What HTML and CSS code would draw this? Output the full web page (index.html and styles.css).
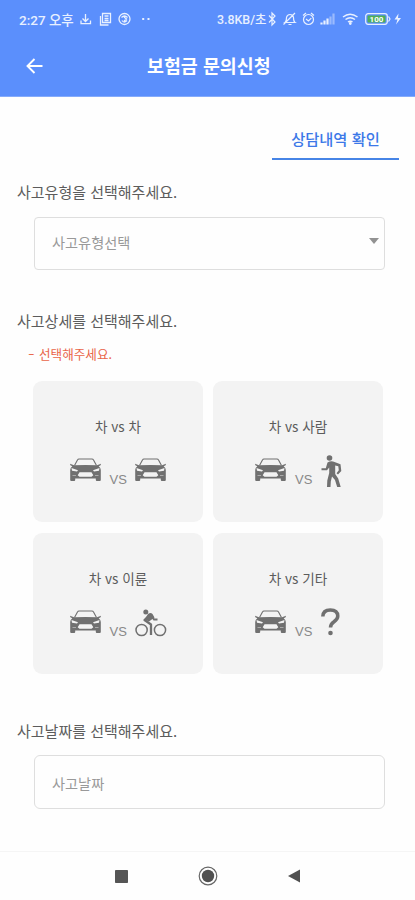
FILE: index.html
```html
<!DOCTYPE html>
<html lang="ko">
<head>
<meta charset="utf-8">
<meta name="viewport" content="width=device-width, initial-scale=1">
<title>보험금 문의신청</title>
<link rel="stylesheet" href="styles.css">
</head>
<body>
<svg class="defs" aria-hidden="true">
  <symbol id="car" viewBox="0 0 31 24">
    <path d="M4.500 7.500 7.600 1.800Q8 1 9 1H22Q23 1 23.400 1.800L26.500 7.500" fill="none" stroke="currentColor" stroke-width="1.100"/>
    <path d="M0 5.800 4 7.200Q15.500 6.800 27 7.200L31 5.800 30.600 7.200 28.700 8.200Q30.800 10 30.800 12V22q0 1-1 1h-3q-1 0-1-1v-1.500H5.200V22q0 1-1 1h-3q-1 0-1-1V12q0-2 2.100-3.800L.4 7.200z"/>
    <path d="M1.500 10 8 12.200 7 13.600 2 12.800zM29.500 10 23 12.200 24 13.600 29 12.800zM9.500 14.300h12l1.800 3-1.800 1.500h-12l-1.800-1.500z" fill="#f3f3f3"/>
    <path d="M2.500 17.500H6M25 17.500h3.500" stroke="#aaa" stroke-width="1"/>
  </symbol>
</svg>
<header class="top">
  <div class="status">
    <span class="time">2:27 오후</span>
    <svg class="s-left" width="70" height="16" viewBox="0 0 70 16" fill="none" stroke="currentColor" stroke-width="1.300">
      <path d="M5.500 3v7M2.500 7.500l3 3 3-3M1 9.500v3.200h9.500V9.500"/>
      <path d="M22.500 2.500h8v9h-8zM20.500 5v9h8M24.500 5h4M24.500 7.500h4M24.500 9.500h4"/>
      <circle cx="44.500" cy="8" r="5.500"/><path d="M41.500 6.500q3-3 6 0M47 9.500q-3 3-5 0M44 6l2.500 2-2.500 2"/>
      <path d="M62.200 8h2M67.500 8h2" stroke-width="2"/>
    </svg>
    <span class="speed">3.8KB/초</span>
    <svg class="s-right" width="134" height="16" viewBox="0 0 134 16" fill="none" stroke="currentColor" stroke-width="1.200">
      <path d="M2 4.500l6 6.500-3 3V2l3 3-6 6.500"/>
      <path d="M18 11.500q1.500-1 1.500-5 .5-3 3.500-3t3.500 3q0 4 1.500 5zM21.500 13.500h3M16.500 13.500 28 2"/>
      <circle cx="41.500" cy="8.500" r="5"/><path d="M36 4.500l3-2.500M47 4.500 44 2M39 8l2.500 2 2.800-2.800"/>
      <path d="M54.500 13.500v-2M57.500 13.500v-4M60.500 13.500v-6" stroke-width="2.200"/><path d="M63.500 13.500v-8M66.500 13.500v-11" stroke-width="2.200" opacity=".45"/>
      <path d="M76 6q7-5.500 14.500 0M78.500 8.500q4.700-3.500 9.500 0M81 11q2.300-1.700 4.500 0" stroke-width="1.500"/><circle cx="83.300" cy="12.500" r=".8" fill="currentColor"/>
      <rect x="98.700" y="2.700" width="21.600" height="10.600" rx="2.500"/><rect x="100.500" y="4.500" width="18" height="7" rx="1" fill="#4fae58" stroke="none"/><path d="M121.500 5.500 123 8l-1.500 2.500"/>
      <path d="M131.500 2.500 127.500 8.500h3l-1.500 5 5-6.500h-3z" fill="currentColor" stroke="none"/>
      <text x="109.500" y="11" class="battery">100</text>
    </svg>
  </div>
  <div class="appbar">
    <svg class="back" width="18" height="16" viewBox="0 0 18 16"><path d="M8.500 1 1.500 8l7 7M1.500 8H16.500" fill="none" stroke="currentColor" stroke-width="1.900"/></svg>
    <h1>보험금 문의신청</h1>
  </div>
</header>
<main>
  <a class="tab">상담내역 확인</a>
  <h2>사고유형을 선택해주세요.</h2>
  <div class="field select"><span>사고유형선택</span><i class="caret"></i></div>
  <h2 class="detail">사고상세를 선택해주세요.</h2>
  <p class="error"><span class="dash">-</span>선택해주세요.</p>
  <div class="cards">
    <div class="card">
      <h3>차 vs 차</h3>
      <div class="pair"><svg class="car"><use href="#car"/></svg><span>VS</span><svg class="car"><use href="#car"/></svg></div>
    </div>
    <div class="card">
      <h3>차 vs 사람</h3>
      <div class="pair person"><svg class="car"><use href="#car"/></svg><span>VS</span>
        <svg class="walker" width="21" height="33" viewBox="0 0 21 33"><circle cx="8.500" cy="3" r="2.800"/><path d="M6.500 7.500Q10 5.500 13.500 7L19.500 9.200 20.300 16 17 19.500 15.500 18.300 17.800 15.300 17.300 11.300 14.200 10.600V19l3 4.500 2.500 8.500h-3.500L14 25l-3-3.500-1.200 5L9.500 32H6l.3-6.500L8.200 18V12.500L6 15.300H.5V13.300H4.800z"/></svg></div>
    </div>
    <div class="card">
      <h3>차 vs 이륜</h3>
      <div class="pair"><svg class="car"><use href="#car"/></svg><span>VS</span>
        <svg class="bike" width="32" height="28" viewBox="0 0 32 28"><g fill="none" stroke="currentColor"><circle cx="6.600" cy="21" r="5.600" stroke-width="1.500"/><circle cx="25" cy="21" r="5.600" stroke-width="1.500"/><path d="M15 6 9.500 11 16 15.500V26" stroke-width="2.300" stroke-linejoin="round"/><path d="M16 6 19 10.500h3.500" stroke-width="1.900"/></g><circle cx="10.800" cy="3" r="2.500"/><path d="M13 5q2.500-2 4.500 0l2 3.500-5.500 4-4.500-2z"/></svg></div>
    </div>
    <div class="card">
      <h3>차 vs 기타</h3>
      <div class="pair other"><svg class="car"><use href="#car"/></svg><span>VS</span>
        <svg class="question" width="19" height="28" viewBox="0 0 19 28"><path d="M1.800 8.500Q2 2 9.300 2t7.500 6q0 3-3.800 5.700-3.500 2.300-3.500 5.800" fill="none" stroke="currentColor" stroke-width="3.500"/><circle cx="9.500" cy="25" r="2.300"/></svg></div>
    </div>
  </div>
  <h2 class="date-label">사고날짜를 선택해주세요.</h2>
  <div class="field date"><span>사고날짜</span></div>
</main>
<nav>
  <svg width="13" height="13"><rect width="13" height="13" rx=".8" fill="#555"/></svg>
  <svg width="20" height="20"><circle cx="10" cy="10" r="8.800" fill="none" stroke="#666" stroke-width="1.200"/><circle cx="10" cy="10" r="6.200" fill="#505050"/></svg>
  <svg width="13" height="14"><path d="M0 7 12 .5v13z" fill="#505050"/></svg>
</nav>
</body>
</html>
```
FILE: styles.css
```css
* { box-sizing: border-box; }
body {
  margin: 0;
  width: 415px;
  height: 900px;
  overflow: hidden;
  display: flex;
  flex-direction: column;
  background: #fefefe;
  color: #5c5c5c;
  font-family: "Noto Sans CJK KR", sans-serif;
}
h1, h2, h3, p { margin: 0; }
svg { display: block; flex: none; fill: currentColor; }
.defs { position: absolute; width: 0; height: 0; }

.top { height: 97px; background: #5b8ffc; border-bottom: 1px solid #85abfb; color: #fff; }
.status { height: 38px; display: flex; align-items: center; padding-left: 19px; color: #e8f0ff; }
.status span { font-family: Roboto, "Noto Sans CJK KR", sans-serif; font-weight: 500; white-space: nowrap; }
.status .time { width: 61px; font-size: 13.500px; }
.s-left { fill: none; }
.status .speed { width: 50px; margin-left: 67px; font-size: 12.400px; }
.s-right { fill: none; }
.battery { font: 700 8px Roboto, sans-serif; fill: #fff; stroke: none; text-anchor: middle; }
.appbar { display: flex; align-items: center; height: 56px; padding-left: 26px; }
.appbar h1 { margin: -2px 0 0 103px; font-size: 18.400px; font-weight: 700; line-height: 28px; white-space: nowrap; }

main { height: 754px; padding-top: 24px; display: flex; flex-direction: column; }
.tab {
  align-self: flex-end;
  width: 127px;
  height: 39px;
  margin-right: 16px;
  border-bottom: 2px solid #4684e6;
  color: #3c78e8;
  font-size: 15.300px;
  font-weight: 500;
  line-height: 35px;
  text-align: center;
}
h2 { height: 24px; margin: 20px 0 0 17px; font-size: 15px; font-weight: 400; line-height: 24px; }
.field {
  width: 351px;
  height: 53px;
  margin: 13px 0 0 34px;
  padding: 0 5px 0 17px;
  display: flex;
  align-items: center;
  justify-content: space-between;
  border: 1px solid #dedede;
  border-radius: 4px;
  color: #999;
  font-size: 14.200px;
  font-weight: 400;
}
.field span { line-height: 20px; }
.select span { margin-bottom: 4px; }
.caret { margin-bottom: 5px; border: 5px solid transparent; border-top: 6px solid #929292; border-bottom: 0; }
.detail { margin-top: 39px; }
.error { height: 20px; margin: 11px 0 0 28px; color: #e96549; font-size: 12.600px; line-height: 20px; display: flex; }
.dash { width: 11px; transform: scaleX(1.500); transform-origin: left; }
.cards { display: grid; grid-template-columns: 170px 170px; grid-auto-rows: 141px; gap: 11px 10px; margin: 17px 0 0 33px; }
.card { padding-top: 34px; border-radius: 9px; background: #f3f3f3; }
.card h3 { height: 22px; font-size: 13.600px; font-weight: 400; line-height: 22px; text-align: center; }
.pair { display: flex; align-items: flex-start; margin: 21px 0 0 36.500px; color: #707070; }
.pair span { width: 17px; margin: 13px 8px 0 9px; font: 13px/18px "Liberation Sans", sans-serif; color: #888; }
.car { width: 31px; height: 24px; }
.person, .other { margin-left: 42px; }
.walker { margin: -3px 0 0 1px; }
.bike { margin-top: -1px; }
.question { margin: -2px 0 0 1px; }
.date-label { margin-top: 45px; }
.field.date { height: 54px; margin-top: 12px; border-radius: 6px; }
.date span { margin-top: 2px; }

nav { height: 49px; border-top: 1px solid #f5f5f5; display: flex; align-items: center; justify-content: center; gap: 70px; }
```
